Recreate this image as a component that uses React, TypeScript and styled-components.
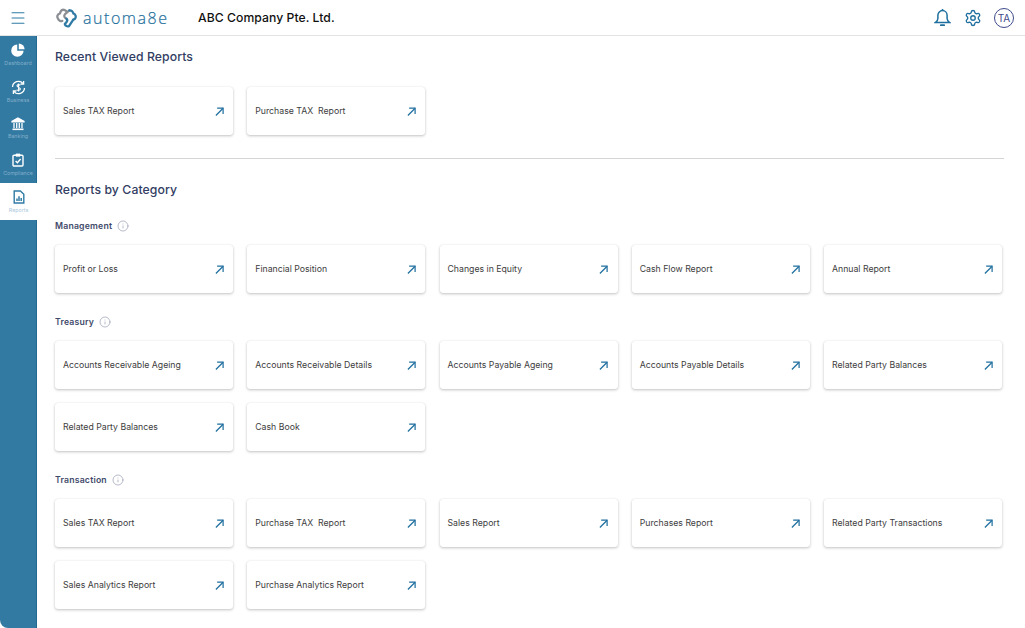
import React from "react";
import styled, { createGlobalStyle } from "styled-components";
import { Menu, Info, Settings } from "lucide-react";

const Global = createGlobalStyle`
  html, body { margin: 0; padding: 0; background: #fff; }
  body { font-family: Inter, "Open Sans", "Liberation Sans", sans-serif; overflow: hidden; }
  * { box-sizing: border-box; }
`;

const Page = styled.div`
  width: 1025px;
  height: 628px;
  display: flex;
  flex-direction: column;
  overflow: hidden;
  background: #fff;
`;
const Header = styled.header`
  height: 36px;
  flex: none;
  display: flex;
  align-items: center;
  border-bottom: 1px solid #e4e4e6;
  padding: 0 11px 0 9px;
`;
const Burger = styled.div`
  width: 18px;
  height: 18px;
  color: #2f7ba5;
  display: flex;
  align-items: center;
  justify-content: center;
`;
const Logo = styled.div`
  margin-left: 29px;
  display: flex;
  align-items: center;
  gap: 6px;
  width: 142px;
`;
const Wordmark = styled.span`
  font-family: "Open Sans", sans-serif;
  font-size: 16px;
  font-weight: 300;
  letter-spacing: 1.55px;
  color: #23709c;
  -webkit-text-stroke: 0.2px #23709c;
`;
const Company = styled.div`
  font-size: 12.2px;
  font-weight: 500;
  color: #111;
  white-space: nowrap;
  letter-spacing: 0.05px;
`;
const HeaderRight = styled.div`
  margin-left: auto;
  display: flex;
  align-items: center;
  gap: 12.5px;
  color: #1f6f9f;
`;
const Avatar = styled.div`
  width: 20px;
  height: 20px;
  border-radius: 50%;
  border: 1px solid #3f4a8a;
  color: #3f4a8a;
  font-size: 10px;
  display: flex;
  align-items: center;
  justify-content: center;
`;
const Body = styled.div`
  flex: 1;
  display: flex;
  min-height: 0;
`;
const Sidebar = styled.nav`
  width: 37px;
  flex: none;
  background: #337aa3;
  border-right: 1px solid #226a94;
  border-bottom-left-radius: 8px;
  display: flex;
  flex-direction: column;
`;
const NavItem = styled.div<{ $active?: boolean }>`
  height: 36.75px;
  width: ${(p) => (p.$active ? "37px" : "auto")};
  flex: none;
  display: flex;
  flex-direction: column;
  align-items: center;
  padding-top: 7px;
  gap: 2.5px;
  background: ${(p) => (p.$active ? "#fff" : "transparent")};
  color: ${(p) => (p.$active ? "#2f7ba5" : "#fff")};
`;
const NavLabel = styled.span<{ $active?: boolean }>`
  font-size: 5.3px;
  line-height: 7px;
  white-space: nowrap;
  color: ${(p) => (p.$active ? "#a9c9dc" : "#82aec8")};
`;
const Main = styled.main`
  flex: 1;
  padding: 0 21px 0 18px;
  min-width: 0;
`;
const Title = styled.h2<{ $top: number; $bottom: number }>`
  margin: ${(p) => p.$top}px 0 ${(p) => p.$bottom}px;
  font-size: 12.25px;
  line-height: 16px;
  font-weight: 500;
  color: #323d63;
  letter-spacing: 0.08px;
`;
const Divider = styled.hr`
  margin: 23px 0 0;
  border: 0;
  border-top: 1px solid #d4d4d6;
`;
const Section = styled.h3<{ $top: number }>`
  margin: ${(p) => p.$top}px 0 13px;
  height: 12px;
  display: flex;
  align-items: center;
  gap: 5px;
  font-size: 8.7px;
  font-weight: 600;
  color: #3f4a6b;
  letter-spacing: 0.2px;
`;
const InfoWrap = styled.span`
  display: flex;
  color: #8f94ad;
`;
const Grid = styled.div`
  display: grid;
  grid-template-columns: repeat(5, 178px);
  column-gap: 14.25px;
  row-gap: 14px;
`;
const Card = styled.div`
  height: 48px;
  border-radius: 3px;
  background: #fff;
  box-shadow: 0 1px 3px rgba(0, 0, 0, 0.24), 0 0 1px rgba(0, 0, 0, 0.1);
  display: flex;
  align-items: center;
  justify-content: space-between;
  padding: 0 9.5px 0 8px;
  font-size: 8.72px;
  color: #3d3d3d;
  white-space: pre;
`;

const UpRight = () => (
  <svg width="9" height="9" viewBox="0 0 10 10" fill="none" stroke="#1f6f9f" strokeWidth="1.35">
    <path d="M1 9.4 9 1.4" />
    <path d="M2.4 1.2H9v6.6" />
  </svg>
);
const BellIcon = () => (
  <svg width="17" height="19" viewBox="0 0 17 19" fill="none" stroke="#1f6f9f" strokeWidth="1.5">
    <path d="M8.5 2.6A4.6 4.6 0 0 0 3.9 7.2v3.4c0 1.8-1 3-2.6 4h14.4c-1.6-1-2.6-2.2-2.6-4V7.2A4.6 4.6 0 0 0 8.5 2.6z" />
    <path d="M8.5 1v1.6" />
    <path d="M6.8 17.2h3.4" strokeLinecap="round" strokeWidth="1.7" />
  </svg>
);
const PieIcon = () => (
  <svg width="14" height="14" viewBox="0 0 14 14" fill="#fff">
    <path d="M6.2 1.4v6.4h6.4A6.2 6.2 0 1 1 6.2 1.4z" />
    <path d="M7.8 0.4a6 6 0 0 1 5.8 5.8H7.8z" />
  </svg>
);
const BusinessIcon = () => (
  <svg width="15" height="15" viewBox="0 0 15 15" fill="none" stroke="#fff" strokeWidth="1.3">
    <path d="M1.5 7A6 6 0 0 1 12 3.4" />
    <path d="M13.5 8A6 6 0 0 1 3 11.6" />
    <path d="M12.6 1v3h-3M2.4 14v-3h3" />
    <path d="M9.4 5.2C9 4.4 6 4.2 6 5.8S9.4 7.4 9.4 9 6.2 10.6 5.7 9.7M7.6 3.6v7.8" strokeWidth="1.1" />
  </svg>
);
const BankIcon = () => (
  <svg width="14" height="14" viewBox="0 0 14 14" fill="none" stroke="#fff" strokeWidth="1.3">
    <path d="M7 1 13 4.3v.6H1v-.6z" fill="#fff" />
    <path d="M3 6v5M5.7 6v5M8.3 6v5M11 6v5" />
    <path d="M1.5 12.3h11" strokeWidth="1.6" />
  </svg>
);
const ComplianceIcon = () => (
  <svg width="14" height="14" viewBox="0 0 14 14" fill="none" stroke="#fff" strokeWidth="1.4">
    <rect x="2" y="2.2" width="10" height="10.8" rx="1" />
    <path d="M5 1h4v2.2H5z" fill="#fff" strokeWidth="0.8" />
    <path d="M4.6 8 6.4 9.8 9.6 6" />
  </svg>
);
const ReportIcon = () => (
  <svg width="14" height="14" viewBox="0 0 14 14" fill="none" stroke="#2f7ba5" strokeWidth="1.4">
    <path d="M2.2 1h6.2l3.4 3.2V13H2.2z" />
    <path d="M5 11V8.4M7 11V6.2M9.2 11V8" strokeWidth="1.5" />
  </svg>
);
const LogoMark = () => (
  <svg width="21" height="20" viewBox="0 0 21 20" fill="none" strokeWidth="2.3" strokeLinecap="round" strokeLinejoin="round">
    <path d="M10.5 3.3 8.8 2.1A3.4 3.4 0 0 0 4.6 3.6L4 5.3A3.4 3.4 0 0 0 2 10.6a3.5 3.5 0 0 0 4.3 2.3" stroke="#8b8f94" />
    <path d="M13.4 2.4 9 6.2a2.4 2.4 0 0 0 .2 3.6l1.2.9" stroke="#8b8f94" />
    <path d="M13.4 2.4a3.4 3.4 0 0 1 3.9 3A3.4 3.4 0 0 1 18.8 11l-1.5.6" stroke="#2f7ba5" />
    <path d="M10.4 10.7a2.3 2.3 0 0 1 .2 3.2L8.8 16a3 3 0 0 0 4.2 2.1l4.3-6.5" stroke="#2f7ba5" />
  </svg>
);

const nav = [
  { label: "Dashboard", icon: <PieIcon /> },
  { label: "Business", icon: <BusinessIcon /> },
  { label: "Banking", icon: <BankIcon /> },
  { label: "Compliance", icon: <ComplianceIcon /> },
  { label: "Reports", icon: <ReportIcon />, active: true },
];

const ReportCard = ({ name }: { name: string }) => (
  <Card>
    {name}
    <UpRight />
  </Card>
);
const Cards = ({ items }: { items: string[] }) => (
  <Grid>
    {items.map((n, i) => (
      <ReportCard key={i} name={n} />
    ))}
  </Grid>
);
const SectionHead = ({ top, name }: { top: number; name: string }) => (
  <Section $top={top}>
    {name}
    <InfoWrap>
      <Info size={12} strokeWidth={1.3} />
    </InfoWrap>
  </Section>
);

export default function App() {
  return (
    <Page>
      <Global />
      <Header>
        <Burger>
          <Menu size={18} strokeWidth={1.4} />
        </Burger>
        <Logo>
          <LogoMark />
          <Wordmark>automa8e</Wordmark>
        </Logo>
        <Company>ABC Company Pte. Ltd.</Company>
        <HeaderRight>
          <BellIcon />
          <Settings size={18} strokeWidth={1.8} />
          <Avatar>TA</Avatar>
        </HeaderRight>
      </Header>
      <Body>
        <Sidebar>
          {nav.map((n) => (
            <NavItem key={n.label} $active={n.active}>
              {n.icon}
              <NavLabel $active={n.active}>{n.label}</NavLabel>
            </NavItem>
          ))}
        </Sidebar>
        <Main>
          <Title $top={13} $bottom={22}>Recent Viewed Reports</Title>
          <Cards items={["Sales TAX Report", "Purchase TAX  Report"]} />
          <Divider />
          <Title $top={22.5} $bottom={0}>Reports by Category</Title>
          <SectionHead top={22.5} name="Management" />
          <Cards items={["Profit or Loss", "Financial Position", "Changes in Equity", "Cash Flow Report", "Annual Report"]} />
          <SectionHead top={23} name="Treasury" />
          <Cards
            items={[
              "Accounts Receivable Ageing",
              "Accounts Receivable Details",
              "Accounts Payable Ageing",
              "Accounts Payable Details",
              "Related Party Balances",
              "Related Party Balances",
              "Cash Book",
            ]}
          />
          <SectionHead top={23} name="Transaction" />
          <Cards
            items={[
              "Sales TAX Report",
              "Purchase TAX  Report",
              "Sales Report",
              "Purchases Report",
              "Related Party Transactions",
              "Sales Analytics Report",
              "Purchase Analytics Report",
            ]}
          />
        </Main>
      </Body>
    </Page>
  );
}
